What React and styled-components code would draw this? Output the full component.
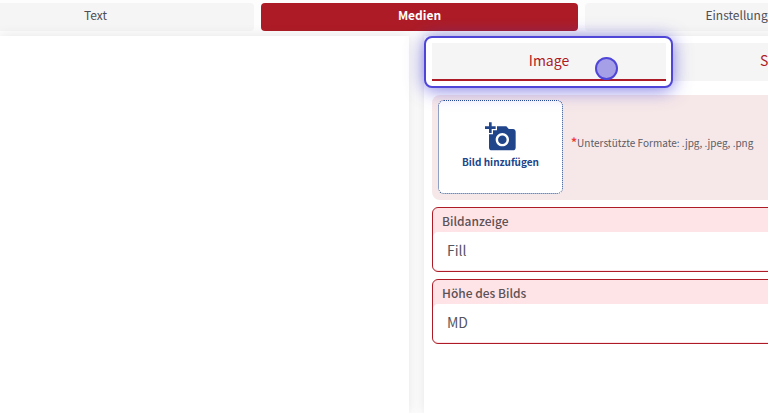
import * as React from "react";
import { useState } from "react";
import styled, { createGlobalStyle } from "styled-components";
import { MdAddAPhoto } from "react-icons/md";

const sections = ["Text", "Medien", "Einstellungen"];
const mediaTypes = ["Image", "Spotlight"];

function App() {
  const [section, setSection] = useState("Medien");
  const [media, setMedia] = useState("Image");

  return (
    <>
      <GlobalStyle />
      <Page>
        <Sections>
          {sections.map((name) => (
            <SectionButton
              key={name}
              $active={name === section}
              onClick={() => setSection(name)}
            >
              {name}
            </SectionButton>
          ))}
        </Sections>
        <Columns>
          <Preview />
          <Settings>
            <MediaTabs>
              {mediaTypes.map((name) => (
                <MediaTab key={name} $active={name === media}>
                  <MediaButton
                    $active={name === media}
                    onClick={() => setMedia(name)}
                  >
                    {name}
                  </MediaButton>
                  {name === media && <Pointer />}
                </MediaTab>
              ))}
            </MediaTabs>
            <Upload>
              <UploadButton>
                <MdAddAPhoto size={32} />
                Bild hinzufügen
              </UploadButton>
              <Hint>
                <span>*</span>Unterstützte Formate: .jpg, .jpeg, .png
              </Hint>
            </Upload>
            <Field>
              <Label htmlFor="fit">Bildanzeige</Label>
              <Select id="fit" defaultValue="Fill">
                <option>Fill</option>
                <option>Contain</option>
              </Select>
            </Field>
            <Field>
              <Label htmlFor="height">Höhe des Bilds</Label>
              <Select id="height" defaultValue="MD">
                <option>SM</option>
                <option>MD</option>
                <option>LG</option>
              </Select>
            </Field>
          </Settings>
        </Columns>
      </Page>
    </>
  );
}

const GlobalStyle = createGlobalStyle`
  * {
    box-sizing: border-box;
  }
  body {
    margin: 0;
    overflow: hidden;
    background-color: #fdfdfd;
  }
  body, button, select {
    font-family: "Noto Sans CJK SC", "Open Sans", sans-serif;
  }
`;

const Page = styled.main`
  display: flex;
  flex-direction: column;
  min-height: 100vh;
  overflow: hidden;
`;

const Sections = styled.nav`
  display: flex;
  gap: 7px;
  margin: 0 -134px 0 -63px;
  padding: 3px 0 5px;
`;

const SectionButton = styled.button`
  flex: 1;
  height: 28px;
  padding: 0 0 4px;
  border: none;
  border-radius: 4px;
  cursor: pointer;
  font-size: 12px;
  line-height: 22px;
  font-weight: ${(props) => (props.$active ? 700 : 400)};
  color: ${(props) => (props.$active ? "#ffffff" : "#4e4e56")};
  background-color: ${(props) => (props.$active ? "#ad1c26" : "#f5f5f5")};
`;

const Columns = styled.div`
  flex: 1;
  display: grid;
  grid-template-columns: 409fr 359fr;
`;

const Preview = styled.section`
  background-color: #ffffff;
  box-shadow: 0 0 12px rgba(0, 0, 0, 0.1);
`;

const Settings = styled.section`
  display: flex;
  flex-direction: column;
  gap: 7px;
  margin: 0 -147px 0 15px;
  padding: 7px 8px;
  background-color: #ffffff;
  box-shadow: 0 0 12px rgba(0, 0, 0, 0.1);
`;

const MediaTabs = styled.div`
  display: flex;
  gap: 7px;
  margin-bottom: 7px;
`;

const MediaTab = styled.div`
  position: relative;
  flex: 1;
  z-index: ${(props) => (props.$active ? 1 : 0)};
  &::before {
    content: "";
    display: ${(props) => (props.$active ? "block" : "none")};
    position: absolute;
    inset: -7px -7px -7px -8px;
    border: 2px solid #4f46d8;
    border-radius: 8px;
    background-color: #ffffff;
    box-shadow: 0 2px 18px rgba(79, 70, 216, 0.7);
  }
`;

const MediaButton = styled.button`
  position: relative;
  display: block;
  width: 100%;
  height: 38px;
  padding: 0 0 2px;
  border: none;
  border-bottom: 2px solid
    ${(props) => (props.$active ? "#ad1c26" : "#f5f5f5")};
  cursor: pointer;
  font-size: 14px;
  line-height: 34px;
  color: #ad1c26;
  background-color: #f5f5f5;
`;

const Pointer = styled.span`
  position: absolute;
  top: 14px;
  left: 163px;
  width: 23px;
  height: 23px;
  border: 2px solid #4f46d8;
  border-radius: 50%;
  background-color: #a59fe8;
  pointer-events: none;
`;

const Upload = styled.div`
  display: flex;
  align-items: center;
  gap: 8px;
  height: 105px;
  padding: 0 6px 2px;
  border-radius: 8px;
  background-color: #f6e8e8;
`;

const UploadButton = styled.button`
  display: flex;
  flex-direction: column;
  align-items: center;
  justify-content: center;
  width: 125px;
  height: 94px;
  padding: 0 0 2px;
  border: 1px dotted #20458a;
  border-radius: 6px;
  cursor: pointer;
  font-size: 10px;
  line-height: 18px;
  font-weight: 700;
  color: #20458a;
  background-color: #ffffff;
`;

const Hint = styled.p`
  margin: 0;
  padding-bottom: 8px;
  font-size: 10px;
  line-height: 16px;
  white-space: nowrap;
  color: #5c5c66;
  span {
    font-size: 12px;
    font-weight: 700;
    color: #f03a3a;
  }
`;

const Field = styled.div`
  display: flex;
  flex-direction: column;
  overflow: hidden;
  border: 1px solid #ad1c26;
  border-radius: 6px;
  padding-bottom: 1px;
  background-color: #ffe4e7;
`;

const Label = styled.label`
  padding: 2px 9px 0;
  font-size: 12px;
  line-height: 22px;
  font-weight: 500;
  color: #5c5155;
`;

const Select = styled.select`
  appearance: none;
  width: 100%;
  height: 38px;
  padding: 0 14px 2px;
  border: none;
  border-radius: 5px;
  font-size: 14px;
  color: #55555e;
  background-color: #ffffff;
`;

export default App;
